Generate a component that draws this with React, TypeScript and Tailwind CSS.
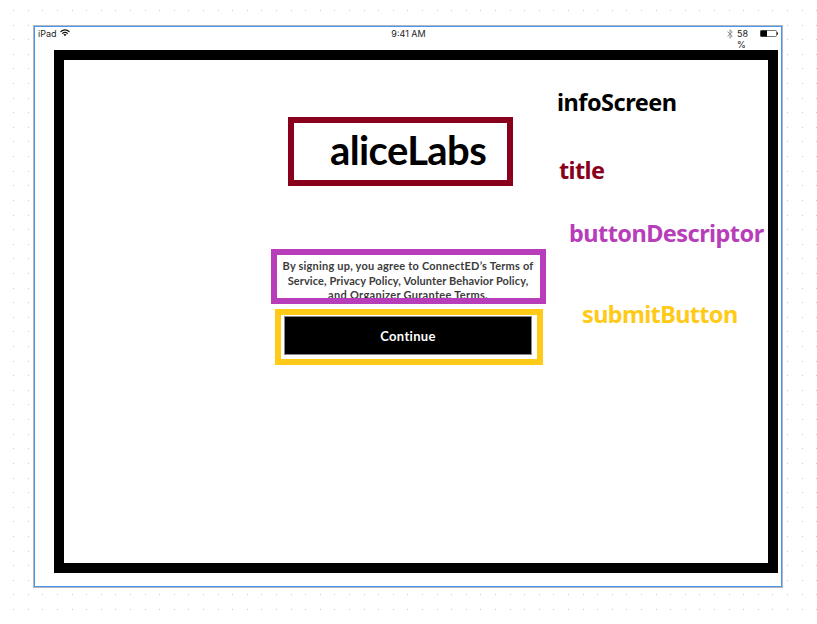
const columns = Array.from({ length: 56 }, (_, i) => Math.round(13.2 + i * 14.6));
const rows = Array.from({ length: 42 }, (_, i) => Math.round(10 + i * 14.61));

function DotGrid() {
  return (
    <svg className="absolute inset-0" width="817" height="624" shapeRendering="crispEdges" aria-hidden="true">
      {rows.map((y) => columns.map((x) => <rect key={`${x}-${y}`} x={x} y={y} width="1" height="1" fill="#c8c8c8" />))}
    </svg>
  );
}

function WifiIcon() {
  return (
    <svg width="10" height="8" viewBox="0 0 10 8" fill="none" stroke="#111" strokeWidth="1.2">
      <path d="M.5 2.8Q5-1.2 9.5 2.8M2.2 4.6Q5 2.2 7.8 4.6" />
      <path d="M3.4 5.6Q5 4.3 6.6 5.6L5 7.2Z" fill="#111" stroke="none" />
    </svg>
  );
}

function BluetoothIcon() {
  return (
    <svg width="6" height="10" viewBox="0 0 6 10" fill="none" stroke="#888" strokeWidth=".9">
      <path d="M.5 2.7 5.3 7 3 9.2V.8L5.3 3 .5 7.3" />
    </svg>
  );
}

function BatteryIcon() {
  return (
    <svg width="18" height="7" viewBox="0 0 18 7">
      <rect x=".5" y=".5" width="16" height="6" rx=".8" fill="white" stroke="#777" strokeWidth="1" />
      <rect x="0.5" y="0.5" width="6.5" height="6" fill="black" />
      <path d="M17 2q1 .3 1 1.5T17 5Z" fill="#111" />
    </svg>
  );
}

function StatusBar() {
  return (
    <header className="flex h-[23px] items-start justify-between pt-px font-['Inter',sans-serif] text-[9px] leading-[12px] text-[#222]">
      <div className="flex w-[100px] gap-1 pl-[3px]">
        <span className="w-[18px] whitespace-nowrap">iPad</span>
        <span className="pt-px"><WifiIcon /></span>
      </div>
      <span className="whitespace-nowrap pl-[1px]">9:41 AM</span>
      <div className="flex w-[100px] justify-end pr-[3px]">
        <span className="pt-px"><BluetoothIcon /></span>
        <span className="ml-[4px] w-[13px] leading-[11px]">58 %</span>
        <span className="ml-[10px] pt-[2px]"><BatteryIcon /></span>
      </div>
    </header>
  );
}

export default function App() {
  return (
    <div className="relative h-[624px] w-[817px] overflow-hidden bg-white">
      <DotGrid />
      <div className="relative pl-[33px] pt-[25px]">
        <div className="h-[563px] w-[750px] border border-[#b5b5bb] bg-white">
          <div className="h-full border border-[#4398f3]">
            <StatusBar />
            <main className="ml-[19px] flex h-[523px] w-[724px] border-[10px] border-black">
              <section className="flex w-[493px] shrink-0 flex-col">
                <h1 className="ml-[224px] mt-[57px] h-[69px] w-[225px] whitespace-nowrap border-[6px] border-[#88001b] pl-[36px] font-['Lato',sans-serif] text-[40px] font-bold leading-[54px] tracking-[-0.6px] text-black">
                  aliceLabs
                </h1>
                <div className="ml-[207px] mt-[63px] h-[55px] w-[275px] overflow-hidden border-[6px] border-[#b83dba] pr-px pt-[4px] text-center font-['Lato',sans-serif] text-[11px] font-bold leading-[14.5px] text-[#3c3c3c]">
                  <p className="whitespace-nowrap tracking-[0.21px]">By signing up, you agree to ConnectED’s Terms of</p>
                  <p className="whitespace-nowrap tracking-[0.1px]">Service, Privacy Policy, Volunter Behavior Policy,</p>
                  <p className="whitespace-nowrap tracking-[0.3px]">and Organizer Gurantee Terms.</p>
                </div>
                <div className="ml-[211px] mt-[5px] h-[56px] w-[268px] border-[6px] border-[#ffca18] pl-[3px] pt-px">
                  <button className="block h-[39px] w-[248px] border border-[#888] bg-black font-['Lato',sans-serif] text-[13px] font-bold leading-[36px] tracking-[0.3px] text-white">
                    Continue
                  </button>
                </div>
              </section>
              <aside className="flex flex-col whitespace-nowrap font-['Noto_Sans',sans-serif] text-[23.5px] font-bold leading-[32px] tracking-[-0.55px]">
                <span className="mt-[26px] tracking-[-0.5px] text-black">infoScreen</span>
                <span className="ml-[2px] mt-[36px] tracking-[-0.6px] text-[#88001b]">title</span>
                <span className="ml-[12px] mt-[31px] text-[#b83dba]">buttonDescriptor</span>
                <span className="ml-[25px] mt-[49px] tracking-[-0.65px] text-[#ffca18]">submitButton</span>
              </aside>
            </main>
          </div>
        </div>
      </div>
    </div>
  );
}
